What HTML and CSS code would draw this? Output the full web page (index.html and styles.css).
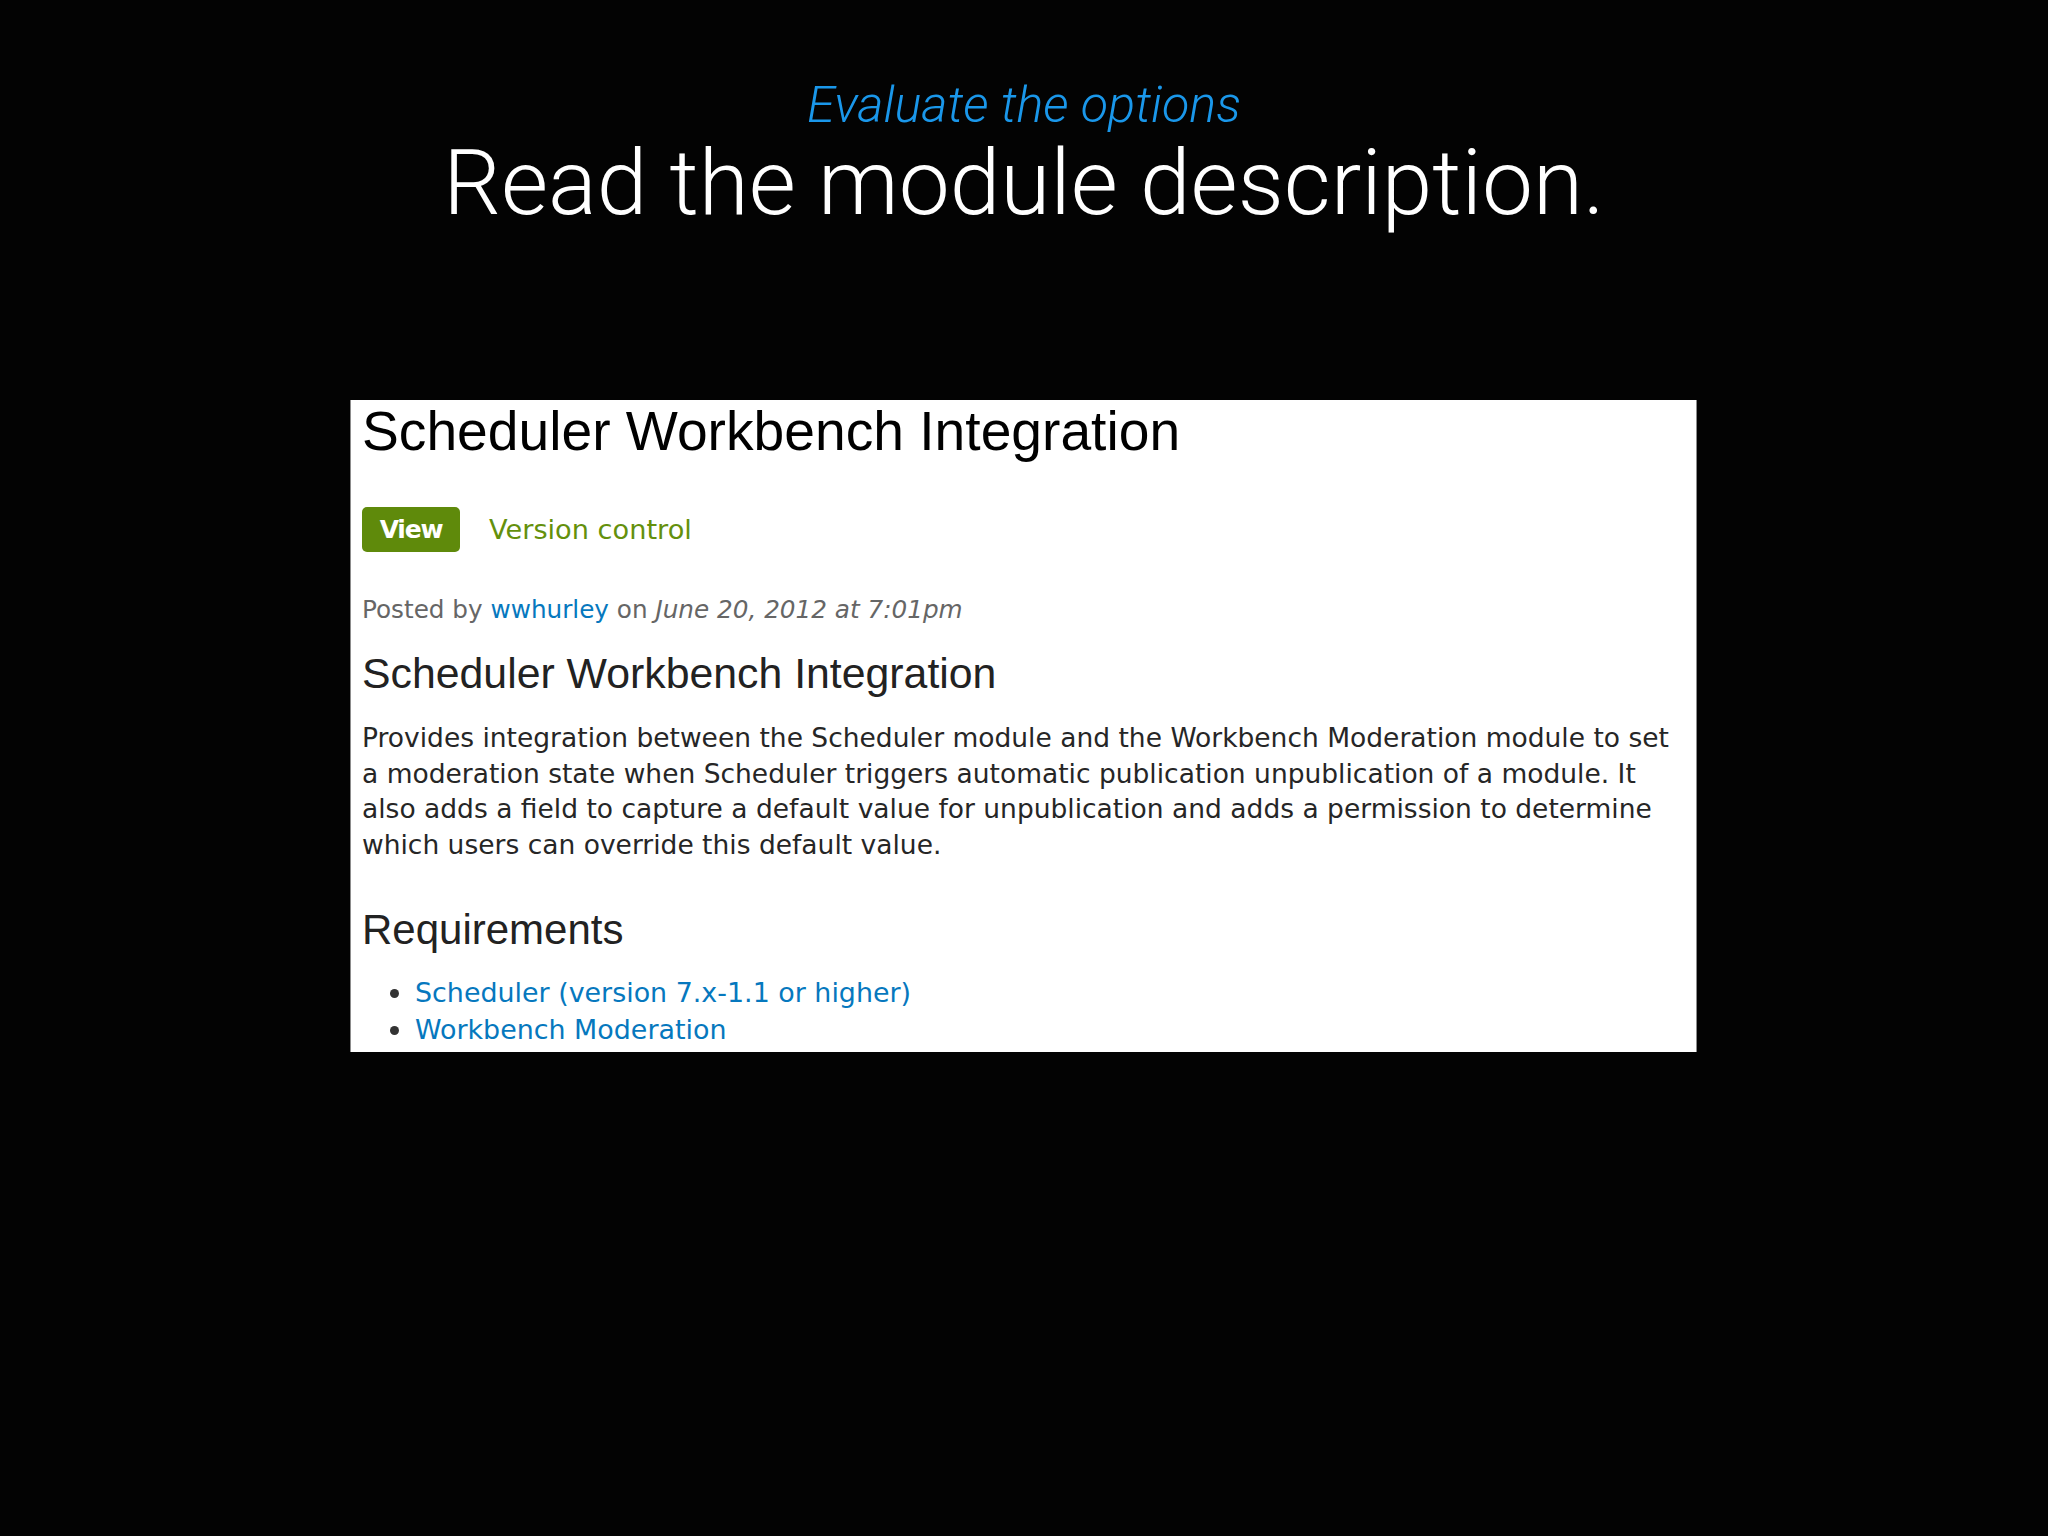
FILE: index.html
```html
<!DOCTYPE html>
<html lang="en">
<head>
<meta charset="utf-8">
<title>Read the module description.</title>
<link rel="stylesheet" href="styles.css">
</head>
<body>
<div class="slide">
  <header class="slide-head">
    <p class="kicker">Evaluate the options</p>
    <h1 class="slide-title">Read the module description.</h1>
  </header>
  <section class="shot">
    <h1 class="node-title">Scheduler Workbench Integration</h1>
    <nav class="tabs">
      <a class="tab tab-active">View</a>
      <a class="tab">Version control</a>
    </nav>
    <p class="submitted">Posted by <a class="link">wwhurley</a> on <em>June 20, 2012 at 7:01pm</em></p>
    <h2 class="sub">Scheduler Workbench Integration</h2>
    <p class="body-text">Provides integration between the Scheduler module and the Workbench Moderation module to set a moderation state when Scheduler triggers automatic publication unpublication of a module. It also adds a field to capture a default value for unpublication and adds a permission to determine which users can override this default value.</p>
    <h2 class="sub req">Requirements</h2>
    <ul class="reqs">
      <li><a class="link">Scheduler (version 7.x-1.1 or higher)</a></li>
      <li><a class="link">Workbench Moderation</a></li>
    </ul>
  </section>
</div>
</body>
</html>
```

FILE: styles.css
```css
html, body {
  margin: 0;
  padding: 0;
  background: #030303;
}

.slide {
  width: 2048px;
  height: 1536px;
  overflow: hidden;
  background: #030303;
}

.slide-head {
  padding-top: 76px;
  text-align: center;
  font-family: Roboto, "Liberation Sans", sans-serif;
  font-weight: 300;
}

.kicker {
  margin: 0;
  font-size: 50.4px;
  line-height: 57px;
  font-style: italic;
  color: #1a97ea;
}

.slide-title {
  margin: 0;
  font-size: 91px;
  line-height: 100px;
  font-weight: 300;
  color: #ffffff;
}

.shot {
  box-sizing: border-box;
  width: 1347px;
  height: 652px;
  margin: 167px 0 0 350px;
  padding: 1px 14px 0 11px;
  background: #ffffff;
  border-left: 1px solid #8c8c8c;
  border-right: 1px solid #8c8c8c;
  overflow: hidden;
  font-family: "DejaVu Sans", Verdana, sans-serif;
  font-size: 26.5px;
  color: #262626;
}

.node-title {
  margin: 0;
  font-family: "Liberation Sans", Arial, sans-serif;
  font-weight: 400;
  font-size: 55.2px;
  line-height: 60px;
  color: #000000;
}

.tabs {
  display: flex;
  align-items: center;
  gap: 29px;
  margin-top: 46px;
  height: 45px;
}

.tab {
  font-size: 27.2px;
  line-height: 45px;
  color: #64900c;
}

.tab-active {
  box-sizing: border-box;
  width: 98px;
  height: 45px;
  text-align: center;
  background: #5f8a0b;
  border-radius: 5px;
  color: #ffffff;
  font-weight: 700;
  font-size: 25px;
  letter-spacing: -1.2px;
}

.submitted {
  margin: 40px 0 0;
  font-size: 24.7px;
  line-height: 36px;
  color: #666666;
}

.submitted em {
  font-style: italic;
}

.link {
  color: #0678be;
  text-decoration: none;
}

.sub {
  margin: 20px 0 0;
  font-family: "Liberation Sans", Arial, sans-serif;
  font-weight: 400;
  font-size: 42.8px;
  line-height: 50px;
  color: #222222;
}

.body-text {
  margin: 22px 0 0;
  line-height: 35.7px;
}

.sub.req {
  margin-top: 42px;
  font-size: 42px;
}

.reqs {
  margin: 19px 0 0;
  padding-left: 53px;
  line-height: 36px;
  list-style: disc;
  font-size: 26.9px;
}

.reqs li::marker {
  font-size: 30px;
  color: #333333;
}
```
